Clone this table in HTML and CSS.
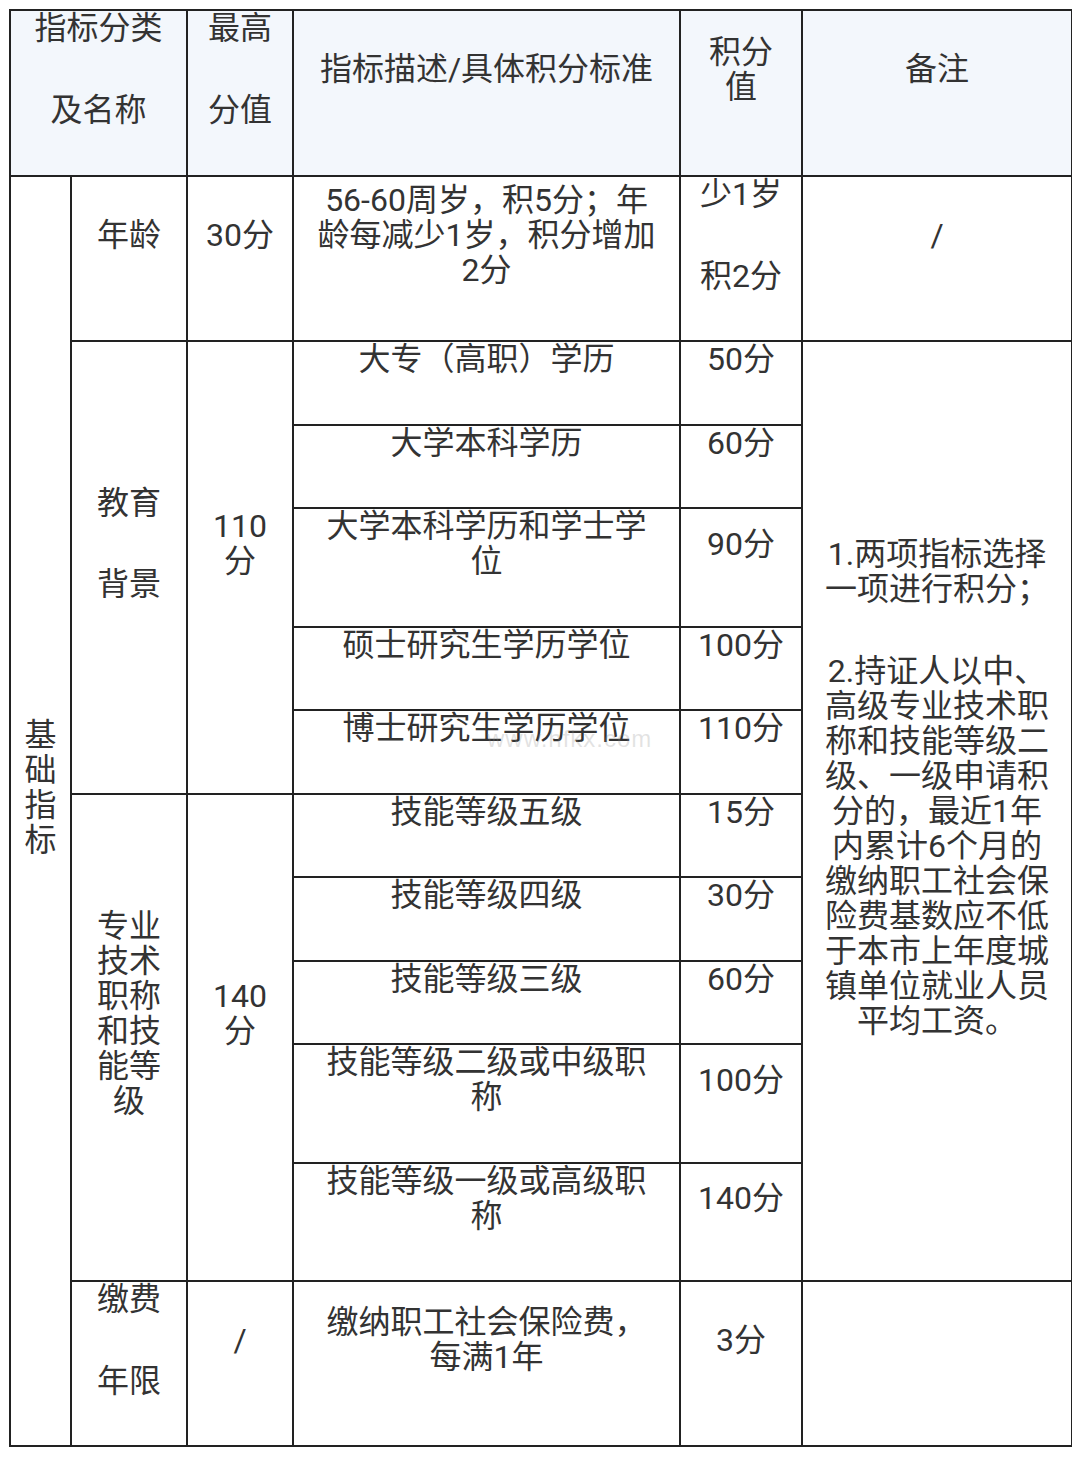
FILE: index.html
```html
<!DOCTYPE html>
<html lang="zh-CN">
<head>
<meta charset="utf-8">
<title>积分指标</title>
<link rel="stylesheet" href="styles.css">
</head>
<body>
<div class="wrap">
<table class="score">
  <colgroup>
    <col class="c1"><col class="c2"><col class="c3"><col class="c4"><col class="c5"><col class="c6">
  </colgroup>
  <thead>
    <tr>
      <th colspan="2" class="k-name"><p>指标分类</p><p>及名称</p></th>
      <th class="k-max"><p>最高</p><p>分值</p></th>
      <th class="k-desc"><p>指标描述/具体积分标准</p></th>
      <th class="k-val"><p>积分值</p></th>
      <th class="k-note"><p>备注</p></th>
    </tr>
  </thead>
  <tbody>
    <tr>
      <td rowspan="12" class="k-cat"><p>基础指标</p></td>
      <td class="k-sub"><p>年龄</p></td>
      <td class="k-max"><p>30分</p></td>
      <td class="k-desc"><p>56-60周岁，积5分；年龄每减少1岁，积分增加2分</p></td>
      <td class="k-val"><p>少1岁</p><p>积2分</p></td>
      <td class="k-note"><p>/</p></td>
    </tr>
    <tr>
      <td rowspan="5" class="k-sub"><p>教育</p><p>背景</p></td>
      <td rowspan="5" class="k-max"><p>110分</p></td>
      <td class="k-desc"><p>大专（高职）学历</p></td>
      <td class="k-val"><p>50分</p></td>
      <td rowspan="10" class="k-note"><p>1.两项指标选择一项进行积分；</p><p>2.持证人以中、高级专业技术职称和技能等级二级、一级申请积分的，最近1年内累计6个月的缴纳职工社会保险费基数应不低于本市上年度城镇单位就业人员平均工资。</p></td>
    </tr>
    <tr>
      <td class="k-desc"><p>大学本科学历</p></td>
      <td class="k-val"><p>60分</p></td>
    </tr>
    <tr>
      <td class="k-desc"><p>大学本科学历和学士学位</p></td>
      <td class="k-val"><p>90分</p></td>
    </tr>
    <tr>
      <td class="k-desc"><p>硕士研究生学历学位</p></td>
      <td class="k-val"><p>100分</p></td>
    </tr>
    <tr>
      <td class="k-desc"><p>博士研究生学历学位</p></td>
      <td class="k-val"><p>110分</p></td>
    </tr>
    <tr>
      <td rowspan="5" class="k-sub"><p>专业技术职称和技能等级</p></td>
      <td rowspan="5" class="k-max"><p>140分</p></td>
      <td class="k-desc"><p>技能等级五级</p></td>
      <td class="k-val"><p>15分</p></td>
    </tr>
    <tr>
      <td class="k-desc"><p>技能等级四级</p></td>
      <td class="k-val"><p>30分</p></td>
    </tr>
    <tr>
      <td class="k-desc"><p>技能等级三级</p></td>
      <td class="k-val"><p>60分</p></td>
    </tr>
    <tr>
      <td class="k-desc"><p>技能等级二级或中级职称</p></td>
      <td class="k-val"><p>100分</p></td>
    </tr>
    <tr>
      <td class="k-desc"><p>技能等级一级或高级职称</p></td>
      <td class="k-val"><p>140分</p></td>
    </tr>
    <tr>
      <td class="k-sub"><p>缴费</p><p>年限</p></td>
      <td class="k-max"><p>/</p></td>
      <td class="k-desc"><p>缴纳职工社会保险费，每满1年</p></td>
      <td class="k-val"><p>3分</p></td>
      <td class="k-note"></td>
    </tr>
  </tbody>
</table>
<span class="watermark">www.hfkx.com</span>
</div>
</body>
</html>
```

FILE: styles.css
```css
html, body {
  background: #ffffff;
}
body {
  margin: 9px 8px 0 9px;
  font-family: Roboto, "Noto Sans CJK SC", "Noto Sans", sans-serif;
  color: #333333;
}
.wrap {
  position: relative;
  width: 1064px;
}
.score {
  border-collapse: collapse;
  table-layout: fixed;
  width: 1064px;
  font-size: 32px;
}
.c1 { width: 61px; }
.c2 { width: 116px; }
.c3 { width: 106px; }
.c4 { width: 387px; }
.c5 { width: 122px; }
.c6 { width: 270px; }

.score th,
.score td {
  border: 2px solid #222222;
  text-align: center;
  vertical-align: middle;
  font-weight: normal;
  padding: 0;
}
.score thead th {
  background: #f3f7fc;
}
.score p {
  margin: 0 0 46.5px;
  line-height: 35px;
}
.score thead p {
  margin-bottom: 47px;
}
.k-cat { padding: 0 10px !important; }
.k-sub { padding: 0 20px !important; }
.k-max { padding: 0 13px !important; }
.k-desc { padding: 0 19px !important; }
.k-val { padding: 0 15px !important; }
.k-note { padding: 0 20px !important; }
.k-name { padding: 0 20px !important; }

.watermark {
  position: absolute;
  left: 478px;
  top: 716px;
  font-family: "Liberation Sans", sans-serif;
  font-size: 24px;
  color: rgba(140, 140, 140, 0.25);
  letter-spacing: 1px;
  pointer-events: none;
}
```
